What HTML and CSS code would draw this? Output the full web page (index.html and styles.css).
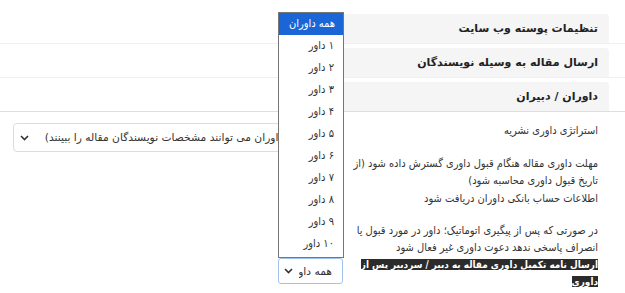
FILE: index.html
```html
<!DOCTYPE html>
<html lang="fa" dir="rtl">
<head>
<meta charset="utf-8">
<title>تنظیمات</title>
<link rel="stylesheet" href="styles.css">
</head>
<body>
<div class="page">
  <div class="acc-row"><div class="acc-head">تنظیمات پوسته وب سایت</div></div>
  <div class="acc-row"><div class="acc-head">ارسال مقاله به وسیله نویسندگان</div></div>
  <div class="acc-row last"><div class="acc-head">داوران / دبیران</div></div>

  <div class="acc-body">
    <div class="form-row row-a">
      <div class="label">استراتژی داوری نشریه</div>
      <div class="ctrl">
        <div class="select big">
          <span class="sel-text">داوری باز (داوران می توانند مشخصات نویسندگان مقاله را ببینند)</span>
          <svg class="chev" width="9" height="6" viewBox="0 0 9 6"><path d="M1 1l3.5 3.5L8 1" fill="none" stroke="#333" stroke-width="1.6"/></svg>
        </div>
      </div>
    </div>
    <div class="form-row row-b">
      <div class="label">مهلت داوری مقاله هنگام قبول داوری گسترش داده شود (از<br>تاریخ قبول داوری محاسبه شود)</div>
      <div class="ctrl"></div>
    </div>
    <div class="form-row row-c">
      <div class="label">اطلاعات حساب بانکی داوران دریافت شود</div>
      <div class="ctrl"></div>
    </div>
    <div class="form-row row-d">
      <div class="label">در صورتی که پس از پیگیری اتوماتیک؛ داور در مورد قبول یا<br>انصراف پاسخی ندهد دعوت داوری غیر فعال شود</div>
      <div class="ctrl"></div>
    </div>
    <div class="form-row row-e">
      <div class="label"><span class="selected">ارسال نامه تکمیل داوری مقاله به دبیر / سردبیر پس از</span><br><span class="selected">داوری</span></div>
      <div class="ctrl">
        <div class="select small">
          <span class="sel-text">همه داوران</span>
          <svg class="chev" width="9" height="6" viewBox="0 0 9 6"><path d="M1 1l3.5 3.5L8 1" fill="none" stroke="#333" stroke-width="1.6"/></svg>
        </div>
      </div>
    </div>
  </div>

  <div class="listbox">
    <div class="opt active">همه داوران</div>
    <div class="opt">۱ داور</div>
    <div class="opt">۲ داور</div>
    <div class="opt">۳ داور</div>
    <div class="opt">۴ داور</div>
    <div class="opt">۵ داور</div>
    <div class="opt">۶ داور</div>
    <div class="opt">۷ داور</div>
    <div class="opt">۸ داور</div>
    <div class="opt">۹ داور</div>
    <div class="opt">۱۰ داور</div>
  </div>
</div>
</body>
</html>
```

FILE: styles.css
```css
* { box-sizing: border-box; }
html, body { margin: 0; padding: 0; background: #fff; }
body {
  font-family: "DejaVu Sans Condensed", "DejaVu Sans", sans-serif;
  font-size: 11px;
  color: #333;
  width: 625px;
  height: 293px;
  overflow: hidden;
}
.page {
  position: relative;
  padding-top: 10px;
}
.acc-row {
  display: flex;
  padding-top: 4px;
  border-bottom: 1px solid #f0f0f0;
}
.acc-row.last { border-bottom-color: #dedede; }
.acc-head {
  width: 309px;
  margin-right: 16px;
  height: 29px;
  background: #f5f5f5;
  border-radius: 4px 4px 0 0;
  padding-right: 11px;
  display: flex;
  align-items: center;
  font-family: "DejaVu Sans", sans-serif;
  font-weight: bold;
  font-size: 11px;
  color: #222;
}
.acc-body { padding-top: 10px; }
.form-row {
  display: flex;
  align-items: flex-start;
}
.label {
  width: 272px;
  padding-right: 27px;
  line-height: 17px;
  font-size: 11px;
  white-space: nowrap;
  flex: none;
}
.ctrl {
  width: 340px;
  display: flex;
  justify-content: flex-start;
  padding-right: 10px;
}
.row-a { height: 33px; }
.row-a .ctrl { padding-top: 1px; }
.row-b { height: 35px; }
.row-c { height: 32px; }
.row-d { height: 34px; }
.row-e .ctrl { padding-top: 2px; }
.select {
  display: flex;
  align-items: center;
  justify-content: space-between;
  overflow: hidden;
  white-space: nowrap;
  background: #fff;
  font-family: "DejaVu Sans", sans-serif;
  font-size: 10.7px;
}
.select.big {
  width: 330px;
  height: 29px;
  border: 1px solid #dcdcdc;
  border-radius: 4px;
  padding: 0 10px 0 6px;
}
.select.big .sel-text { padding-left: 10px; }
.select.small {
  width: 65px;
  height: 26px;
  border: 1px solid #9fc3ec;
  border-radius: 3px;
  padding: 0 10px 0 5px;
}
.sel-text { overflow: hidden; flex: 1; text-align: right; }
.chev { flex: none; margin-right: 6px; }
.selected {
  background: #2b2b2b;
  color: #fff;
  font-weight: bold;
  font-size: 9.9px;
}
.listbox {
  position: absolute;
  left: 278px;
  top: 12px;
  width: 66px;
  height: 246px;
  background: #fff;
  border: 1px solid #767676;
  overflow: hidden;
  font-size: 11px;
}
.opt {
  height: 22px;
  line-height: 22px;
  padding-right: 9px;
  color: #333;
  white-space: nowrap;
}
.opt.active {
  background: #1a66d6;
  color: #fff;
  padding-right: 8px;
}
```
